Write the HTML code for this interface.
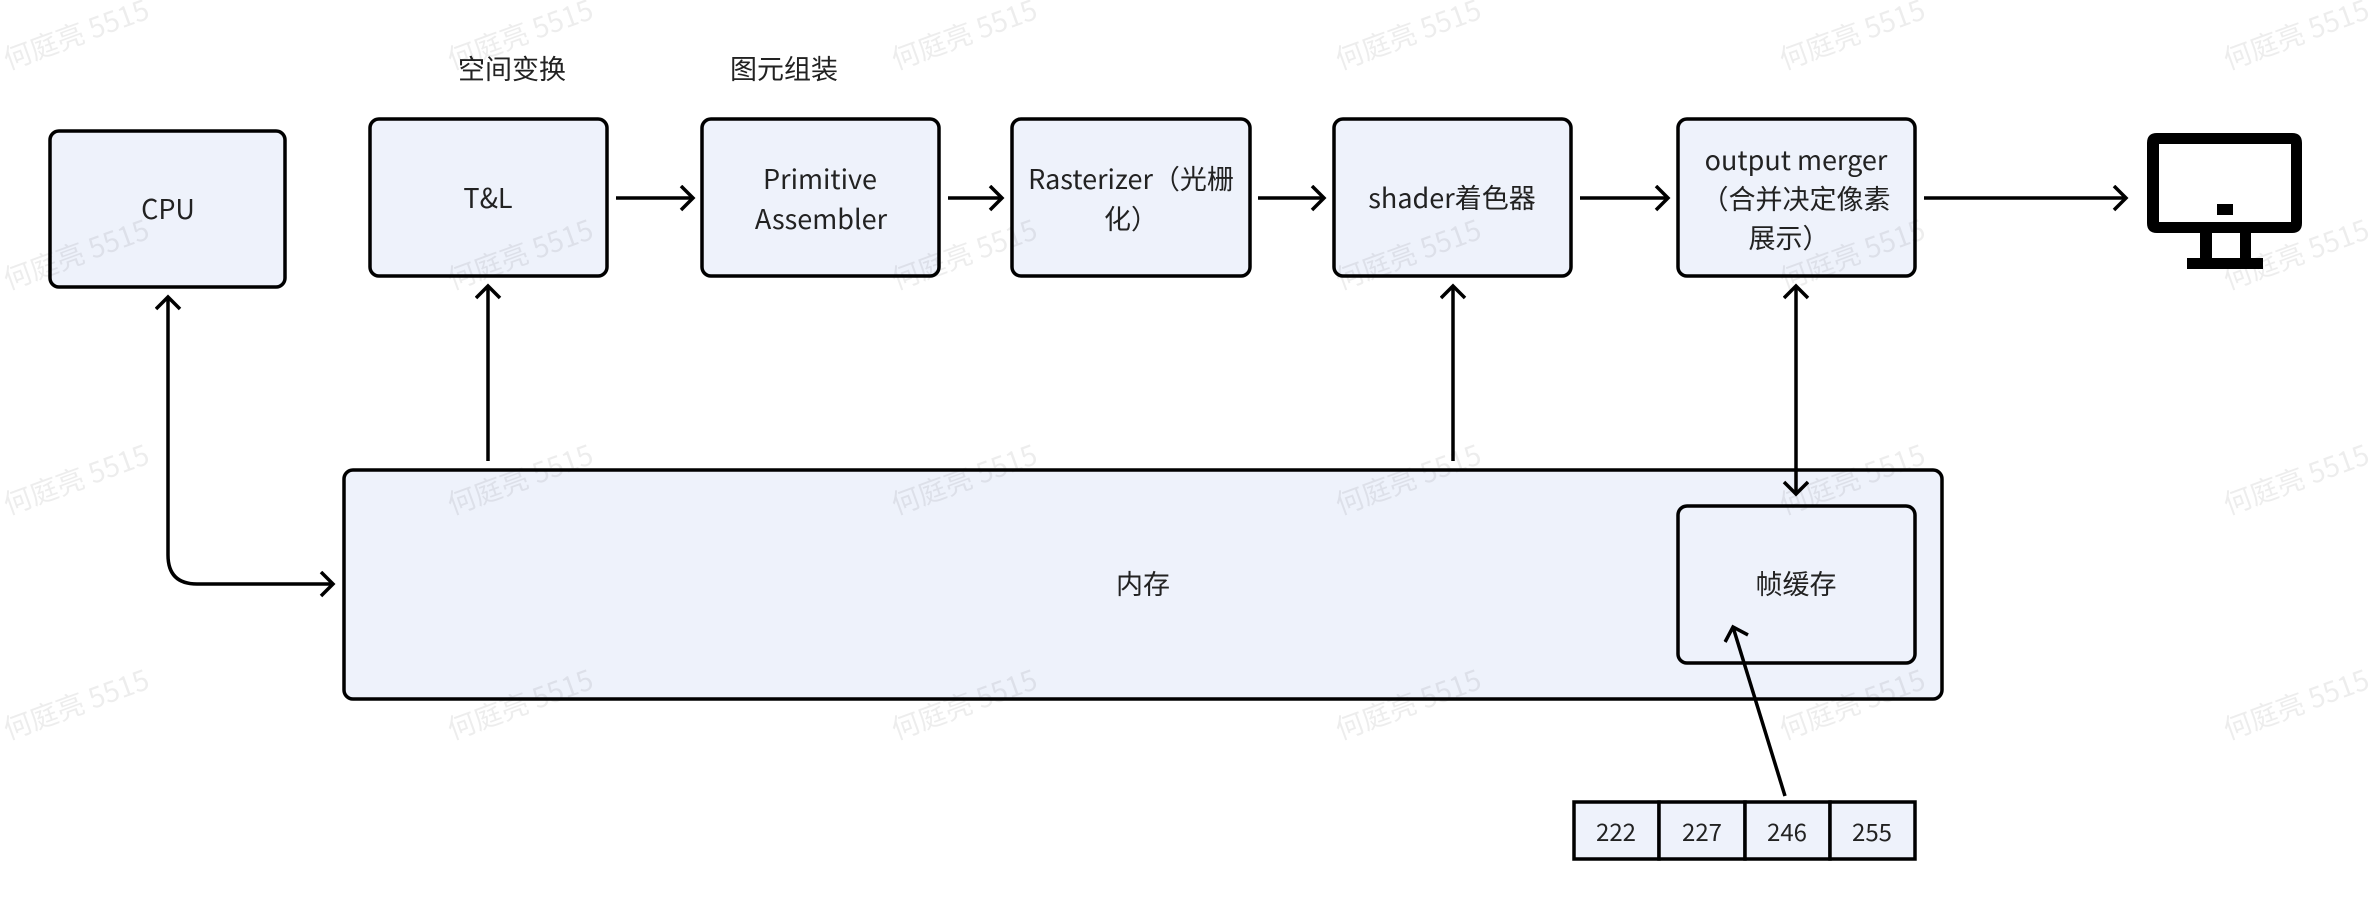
<!DOCTYPE html>
<html><head><meta charset="utf-8"><style>
html,body{margin:0;padding:0;background:#fff;}
svg{display:block}
text{font-family:"Noto Sans CJK SC","Liberation Sans",sans-serif;font-size:27px;fill:#222;}
.wm{font-size:28px;fill:#000;fill-opacity:0.07;}
</style></head><body>
<svg width="2368" height="910" viewBox="0 0 2368 910" xmlns="http://www.w3.org/2000/svg">
<defs>
<marker id="ah" markerWidth="20" markerHeight="30" refX="14" refY="13" orient="auto" markerUnits="userSpaceOnUse">
<path d="M2,1 L14,13 L2,25" fill="none" stroke="#000" stroke-width="3.5"/>
</marker>
</defs>
<g fill="#eef2fb" stroke="#000" stroke-width="3.5">
<rect x="50" y="131" width="235" height="156" rx="9"/>
<rect x="370" y="119" width="237" height="157" rx="9"/>
<rect x="702" y="119" width="237" height="157" rx="9"/>
<rect x="1012" y="119" width="238" height="157" rx="9"/>
<rect x="1334" y="119" width="237" height="157" rx="9"/>
<rect x="1678" y="119" width="237" height="157" rx="9"/>
<rect x="344" y="470" width="1598" height="229" rx="9"/>
<rect x="1678" y="506" width="237" height="157" rx="9"/>
<rect x="1574" y="802" width="85" height="57"/>
<rect x="1659" y="802" width="86" height="57"/>
<rect x="1745" y="802" width="85" height="57"/>
<rect x="1830" y="802" width="85" height="57"/>
</g>
<g fill="none" stroke="#000" stroke-width="3.5" marker-end="url(#ah)">
<line x1="616" y1="198" x2="693" y2="198"/>
<line x1="948" y1="198" x2="1002" y2="198"/>
<line x1="1258" y1="198" x2="1324" y2="198"/>
<line x1="1580" y1="198" x2="1668" y2="198"/>
<line x1="1924" y1="198" x2="2126" y2="198"/>
<line x1="488" y1="461" x2="488" y2="286"/>
<line x1="1453" y1="461" x2="1453" y2="286"/>
<line x1="1796" y1="390" x2="1796" y2="286"/>
<line x1="1796" y1="390" x2="1796" y2="494"/>
<line x1="1785" y1="796" x2="1733" y2="627"/>
<path d="M168,420 L168,297" />
<path d="M168,420 L168,555 Q168,584 197,584 L333,584"/>
</g>
<g fill="#000">
<path fill-rule="evenodd" d="M2147,143 Q2147,133 2157,133 L2292,133 Q2302,133 2302,143 L2302,223 Q2302,233 2292,233 L2157,233 Q2147,233 2147,223 Z M2159,144 L2159,222 L2291,222 L2291,144 Z"/>
<rect x="2217" y="204" width="16" height="11"/>
<rect x="2200" y="232" width="12" height="27"/>
<rect x="2240" y="232" width="11" height="27"/>
<rect x="2187" y="258" width="76" height="11"/>
</g>
<g text-anchor="middle">
<text x="512" y="79">空间变换</text>
<text x="784" y="79">图元组装</text>
<text x="168" y="219">CPU</text>
<text x="488" y="208">T&amp;L</text>
<text x="820" y="189">Primitive</text>
<text x="821" y="229">Assembler</text>
<text x="1131" y="189">Rasterizer（光栅</text>
<text x="1131" y="229">化）</text>
<text x="1452" y="208">shader着色器</text>
<text x="1796" y="170">output merger</text>
<text x="1796" y="209">（合并决定像素</text>
<text x="1789" y="248">展示）</text>
<text x="1143" y="594">内存</text>
<text x="1796" y="594">帧缓存</text>
<text x="1616" y="841" style="font-size:24px">222</text>
<text x="1702" y="841" style="font-size:24px">227</text>
<text x="1787" y="841" style="font-size:24px">246</text>
<text x="1872" y="841" style="font-size:24px">255</text>
</g>
<g>
<text class="wm" transform="translate(8,70) rotate(-20)">何庭亮 5515</text>
<text class="wm" transform="translate(452,70) rotate(-20)">何庭亮 5515</text>
<text class="wm" transform="translate(896,70) rotate(-20)">何庭亮 5515</text>
<text class="wm" transform="translate(1340,70) rotate(-20)">何庭亮 5515</text>
<text class="wm" transform="translate(1784,70) rotate(-20)">何庭亮 5515</text>
<text class="wm" transform="translate(2228,70) rotate(-20)">何庭亮 5515</text>
<text class="wm" transform="translate(8,290) rotate(-20)">何庭亮 5515</text>
<text class="wm" transform="translate(452,290) rotate(-20)">何庭亮 5515</text>
<text class="wm" transform="translate(896,290) rotate(-20)">何庭亮 5515</text>
<text class="wm" transform="translate(1340,290) rotate(-20)">何庭亮 5515</text>
<text class="wm" transform="translate(1784,290) rotate(-20)">何庭亮 5515</text>
<text class="wm" transform="translate(2228,290) rotate(-20)">何庭亮 5515</text>
<text class="wm" transform="translate(8,515) rotate(-20)">何庭亮 5515</text>
<text class="wm" transform="translate(452,515) rotate(-20)">何庭亮 5515</text>
<text class="wm" transform="translate(896,515) rotate(-20)">何庭亮 5515</text>
<text class="wm" transform="translate(1340,515) rotate(-20)">何庭亮 5515</text>
<text class="wm" transform="translate(1784,515) rotate(-20)">何庭亮 5515</text>
<text class="wm" transform="translate(2228,515) rotate(-20)">何庭亮 5515</text>
<text class="wm" transform="translate(8,740) rotate(-20)">何庭亮 5515</text>
<text class="wm" transform="translate(452,740) rotate(-20)">何庭亮 5515</text>
<text class="wm" transform="translate(896,740) rotate(-20)">何庭亮 5515</text>
<text class="wm" transform="translate(1340,740) rotate(-20)">何庭亮 5515</text>
<text class="wm" transform="translate(1784,740) rotate(-20)">何庭亮 5515</text>
<text class="wm" transform="translate(2228,740) rotate(-20)">何庭亮 5515</text>
</g>
</svg>
</body></html>
